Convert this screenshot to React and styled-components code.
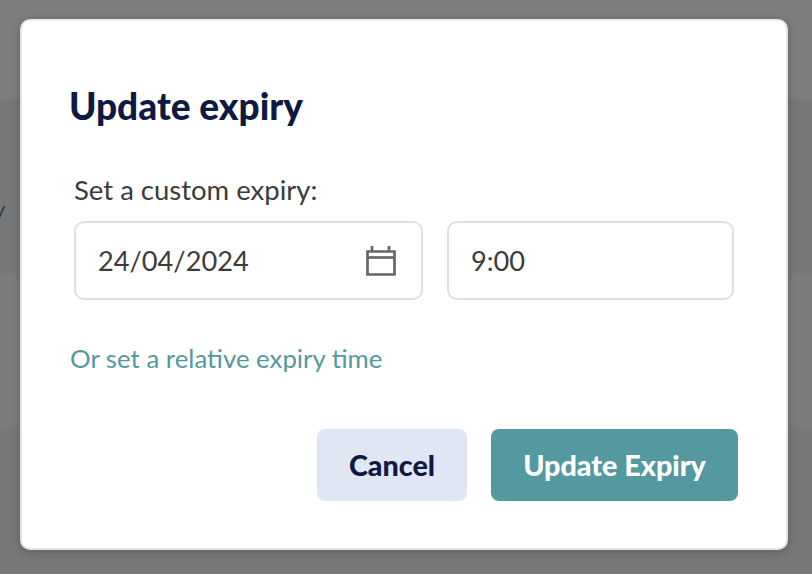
import React from "react";
import styled, { createGlobalStyle } from "styled-components";

const GlobalStyle = createGlobalStyle`
  html, body {
    margin: 0;
    padding: 0;
    background: #7d7d7d;
  }
  * {
    box-sizing: border-box;
  }
`;

const Backdrop = styled.div`
  position: relative;
  width: 812px;
  height: 574px;
  overflow: hidden;
  padding: 19px 24px 24px 20px;
  font-family: Lato, "Liberation Sans", sans-serif;
  background: linear-gradient(
    to bottom,
    #7d7d7d 0,
    #7d7d7d 100px,
    #76787a 100px,
    #76787a 274px,
    #7b7b7b 274px,
    #7b7b7b 429px,
    #76787a 429px
  );
`;

const PeekText = styled.span`
  position: absolute;
  left: -6px;
  top: 195px;
  font-size: 22px;
  color: #3a3a3a;
`;

const Modal = styled.div`
  position: relative;
  width: 768px;
  height: 531px;
  padding: 65px 48px 47px 47px;
  display: flex;
  flex-direction: column;
  background: #fff;
  border: 2px solid #e3e3e3;
  border-top-color: #ececec;
  border-radius: 10px;
  box-shadow: 0 2px 10px rgba(0, 0, 0, 0.22);
`;

const Title = styled.h2`
  margin: 0;
  font-size: 37px;
  line-height: 40px;
  font-weight: 900;
  color: #0f1a43;
`;

const Field = styled.div`
  margin: 47px 0 0 5px;
`;

const Label = styled.div`
  font-size: 27.5px;
  line-height: 34px;
  color: #3c3c3c;
`;

const Inputs = styled.div`
  margin-top: 14px;
  display: flex;
  gap: 24px;
`;

const InputBox = styled.div`
  width: ${(p) => p.$width}px;
  height: 79px;
  padding: 0 25px 0 22px;
  display: flex;
  align-items: center;
  justify-content: space-between;
  border: 2px solid #e0e0e0;
  border-radius: 10px;
  font-size: 27.2px;
  color: #3c3c3c;
`;

const CalendarIcon = () => (
  <svg width="30" height="30" viewBox="0 0 30 30" fill="none" stroke="#666" strokeWidth="2.7">
    <path d="M1.5 5.5H28.5V28.5H1.5Z" />
    <path d="M1.5 11.5H28.5" />
    <path d="M6 0V5.5M23 0V5.5" />
  </svg>
);

const RelativeLink = styled.a`
  margin: 41px 0 0 1px;
  font-size: 25.8px;
  line-height: 34px;
  color: #54999f;
`;

const Actions = styled.div`
  margin-top: auto;
  display: flex;
  justify-content: flex-end;
  gap: 24px;
`;

const Button = styled.button`
  height: 72px;
  width: ${(p) => p.$width}px;
  border: none;
  border-radius: 8px;
  font-family: inherit;
  font-size: 28.7px;
  font-weight: 900;
  color: ${(p) => (p.$primary ? "#fff" : "#0f1a43")};
  background: ${(p) => (p.$primary ? "#54999f" : "#e1e6f4")};
`;

export default function App() {
  return (
    <>
      <GlobalStyle />
      <Backdrop>
        <PeekText>y</PeekText>
        <Modal>
          <Title>Update expiry</Title>
          <Field>
            <Label>Set a custom expiry:</Label>
            <Inputs>
              <InputBox $width={349}>
                24/04/2024
                <CalendarIcon />
              </InputBox>
              <InputBox $width={287}>9:00</InputBox>
            </Inputs>
          </Field>
          <RelativeLink>Or set a relative expiry time</RelativeLink>
          <Actions>
            <Button $width={150}>Cancel</Button>
            <Button $width={247} $primary>
              Update Expiry
            </Button>
          </Actions>
        </Modal>
      </Backdrop>
    </>
  );
}
